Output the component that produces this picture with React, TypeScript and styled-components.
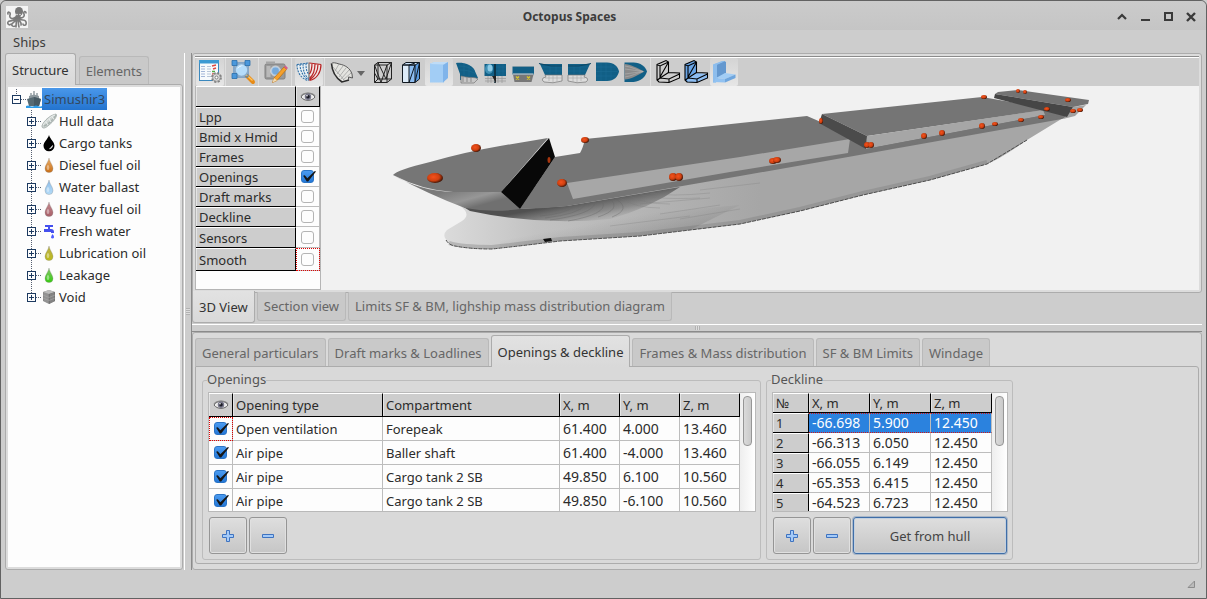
import React from "react";
import styled, { createGlobalStyle, css } from "styled-components";

const GlobalStyle = createGlobalStyle`
  *, *::before, *::after { box-sizing: border-box; }
  body {
    margin: 0;
    background: #cdcdcd;
    color: #2b2b2b;
    font-family: "Noto Sans", "Open Sans", sans-serif;
    font-size: 13px;
    line-height: 18px;
  }
  button, input { font: inherit; color: inherit; margin: 0; }
  ul { list-style: none; margin: 0; padding: 0; }
`;

const line = "#acacac";

/* ---------- window ---------- */

const Window = styled.div`
  display: flex;
  flex-direction: column;
  min-height: 100vh;
  background: #cdcdcd;
  border: 1px solid #626262;
  border-radius: 6px 6px 0 0;
`;

const TitleBar = styled.header`
  display: grid;
  grid-template-columns: auto 1fr auto;
  align-items: center;
  height: 29px;
  padding: 2px 8px 0 5px;
  background: linear-gradient(#cbcbcb, #c5c5c5);
  border-radius: 6px 6px 0 0;
`;

const Title = styled.h1`
  margin: 0;
  font-size: 12px;
  font-weight: 700;
  text-align: center;
  color: #3c3c3c;
`;

const WindowButtons = styled.div`
  display: flex;
  justify-content: flex-end;
  gap: 9px;
  padding-left: 4px;
`;

const WindowButton = styled.button`
  display: flex;
  width: 14px;
  height: 14px;
  padding: 0;
  border: 0;
  background: none;
`;

const MenuBar = styled.nav`
  display: flex;
  align-items: center;
  height: 23px;
  padding: 0 12px;
`;

const MenuItem = styled.button`
  padding: 0;
  border: 0;
  background: none;
  color: #3c3c3c;
`;

const Main = styled.main`
  display: flex;
  flex: 1;
  padding: 0 4px;
`;

const StatusBar = styled.footer`
  display: flex;
  align-items: center;
  justify-content: flex-end;
  height: 28px;
  padding: 0 11px;
`;

/* ---------- tabs and frames ---------- */

const Tabs = styled.div`
  display: flex;
  align-items: flex-end;
  gap: 2px;
  position: relative;
  margin-bottom: -1px;
`;

const BottomTabs = styled(Tabs)`
  align-items: flex-start;
  margin: -2px 0 0;
`;

const SideTabs = styled(Tabs)`
  gap: 3px;
`;

const Tab = styled.button<{ $active?: boolean; $below?: boolean }>`
  height: ${(p) => (p.$active ? 32 : p.$below ? 29 : 28)}px;
  margin: ${(p) => (p.$active ? "0" : p.$below ? "1px 0 0" : "0 0 1px")};
  padding: 0 6px;
  white-space: nowrap;
  border: 1px solid ${(p) => (p.$active ? line : "#b9b9b9")};
  background: ${(p) => (p.$active ? "linear-gradient(#e2e2e2, #d9d9d9)" : "#c9c9c9")};
  color: ${(p) => (p.$active ? "#333" : "#666")};
  ${(p) =>
    p.$below
      ? css`
          border-top: 0;
          border-radius: 0 0 3px 3px;
        `
      : css`
          border-bottom: 0;
          border-radius: 3px 3px 0 0;
        `}
`;

const SideColumn = styled.aside`
  display: flex;
  flex-direction: column;
  flex: none;
  width: 178px;
  margin-right: 1px;
`;

const TreeFrame = styled.div`
  flex: 1;
  padding: 2px;
  border: 1px solid ${line};
  border-radius: 0 3px 3px 3px;
  background: #dcdcdc;
`;

const Splitter = styled.div<{ $horizontal?: boolean }>`
  display: flex;
  flex: none;
  align-items: center;
  justify-content: center;
  background: #cdcdcd;
  ${(p) =>
    p.$horizontal
      ? css`
          height: 8px;
          margin-top: 1px;
          border-top: 1px solid #fff;
          border-bottom: 1px solid #8b8b8b;
        `
      : css`
          width: 8px;
          border-left: 1px solid #fff;
          border-right: 1px solid #8b8b8b;
        `}
`;

const Grip = styled.span<{ $horizontal?: boolean }>`
  width: ${(p) => (p.$horizontal ? 5 : 4)}px;
  height: ${(p) => (p.$horizontal ? 4 : 7)}px;
  background: repeating-linear-gradient(
    ${(p) => (p.$horizontal ? "90deg" : "180deg")},
    #b2b2b2 0 1px,
    #dedede 1px 2px
  );
`;

const WorkColumn = styled.div`
  display: flex;
  flex-direction: column;
  flex: 1;
  min-width: 0;
`;

const ViewFrame = styled.section`
  padding: 2px;
  border: 1px solid ${line};
  border-radius: 3px 3px 3px 0;
  background: #dcdcdc;
`;

const DetailFrame = styled.section`
  padding: 2px 2px 5px;
  border: 1px solid ${line};
  border-radius: 3px;
  background: #dadada;
`;

const DetailPane = styled.div`
  display: flex;
  gap: 5px;
  padding: 4px 6px 3px;
  border: 1px solid ${line};
  border-radius: 0 3px 3px 3px;
  background: #d9d9d9;
`;

/* ---------- tree ---------- */

const TreeBox = styled.div`
  height: 100%;
  padding: 1px 0 0 3px;
  background: #fdfdfd;
`;

const TreeRow = styled.button<{ $level: number }>`
  display: flex;
  align-items: center;
  width: 100%;
  height: 22px;
  padding: 0 0 0 ${(p) => p.$level * 15}px;
  border: 0;
  background: none;
  text-align: left;
  white-space: nowrap;
`;

const TreeText = styled.span<{ $selected?: boolean }>`
  height: 22px;
  padding: 0 2px;
  line-height: 22px;
  ${(p) =>
    p.$selected &&
    css`
      color: #33485f;
      background: linear-gradient(#4a98ea, #2474cf);
    `}
`;

/* ---------- toolbar ---------- */

const ToolBar = styled.div`
  display: flex;
  height: 30px;
  border-top: 1px solid #8b8b8b;
  box-shadow: inset 0 1px #fff;
  padding: 1px 0 0 1px;
  background: #cdcdcd;
`;

const ToolButton = styled.button<{ $lit?: boolean; $wide?: boolean }>`
  display: flex;
  flex: none;
  align-items: center;
  width: ${(p) => (p.$wide ? 41 : 28)}px;
  height: 28px;
  padding: 0;
  border: 0;
  border-radius: 2px;
  background: ${(p) => (p.$lit ? "linear-gradient(#d4d4d4, #e6e6e6)" : "none")};
`;

const ToolGap = styled.span`
  flex: none;
  width: 5px;
  background: linear-gradient(90deg, transparent 1px, #dedede 1px 2px, transparent 2px);
`;

const ViewBody = styled.div`
  display: flex;
  align-items: stretch;
  background: #f1f1f1;
`;

const LayerPanel = styled.div`
  flex: none;
  width: 126px;
  min-height: 204px;
  border: solid #b5b5b5;
  border-width: 0 1px 1px 1px;
  background: #fdfdfd;
`;

const Scene = styled.div`
  flex: 1;
  min-width: 0;
  svg { display: block; width: 100%; height: 204px; }
`;

/* ---------- grids ---------- */

const Grid = styled.table`
  flex: none;
  border-collapse: separate;
  border-spacing: 0;
  table-layout: fixed;
`;

const HeadCell = styled.th<{ $h?: number }>`
  height: ${(p) => p.$h ?? 20}px;
  padding: 0 3px;
  border: solid;
  border-width: 1px 1px 1px 0;
  border-color: #fff #000 #000 #fff;
  box-shadow: inset 1px 0 #e4e4e4;
  background: #cdcdcd;
  font-weight: 400;
  text-align: left;
  white-space: nowrap;
  svg { display: block; margin: 0 auto; }
`;

const Row = styled.tr<{ $selected?: boolean }>`
  td {
    background: ${(p) => (p.$selected ? "#2b82de" : "#fdfdfd")};
    color: ${(p) => (p.$selected ? "#fff" : "inherit")};
    ${(p) => p.$selected && css`border-bottom: 1px dotted #d01818; border-top: 1px dotted #d01818;`}
  }
`;

const Cell = styled.td<{ $h?: number; $focus?: boolean; $number?: boolean }>`
  height: ${(p) => p.$h ?? 20}px;
  padding: 0 3px;
  border: solid #bdbdbd;
  border-width: 0 1px 1px 0;
  font-size: ${(p) => (p.$number ? 14 : 13)}px;
  white-space: nowrap;
  ${(p) => p.$focus && css`outline: 1px dotted #e00000; outline-offset: -1px;`}
`;

const Group = styled.fieldset`
  flex: none;
  min-width: 0;
  margin: 0;
  padding: 3px 4px 5px 5px;
  border: 1px solid #bcbcbc;
  border-radius: 3px;
`;

const GroupTitle = styled.legend`
  height: 18px;
  margin-left: -1px;
  padding: 0;
  line-height: 16px;
  color: #555;
`;

const GridBox = styled.div`
  display: flex;
  height: 120px;
  margin-bottom: 5px;
  overflow: hidden;
  border: 1px solid #b9b9b9;
  background: #fdfdfd;
`;

const ScrollTrack = styled.div`
  width: 15px;
  padding: 3px 3px;
  background: linear-gradient(90deg, #eee, #fff);
`;

const ScrollThumb = styled.div`
  width: 9px;
  height: 50px;
  border: 1px solid #969696;
  border-radius: 4px;
  background: linear-gradient(90deg, #dadada, #cacaca);
`;

const Actions = styled.div`
  display: flex;
  gap: 2px;
  padding-left: 1px;
`;

const PushButton = styled.button<{ $wide?: boolean }>`
  display: flex;
  align-items: center;
  justify-content: center;
  width: ${(p) => (p.$wide ? 154 : 38)}px;
  height: 37px;
  padding: 0;
  border: 1px solid ${(p) => (p.$wide ? "#3f6ea8" : "#959595")};
  border-radius: 3px;
  background: linear-gradient(#dedede, #c6c6c6);
  box-shadow: inset 0 0 0 1px ${(p) => (p.$wide ? "#c3d0df" : "#e0e0e0")},
    0 0 0 1px ${(p) => (p.$wide ? "#a9b7c8" : "transparent")};
  color: #444;
`;

const CheckLabel = styled.label`
  display: flex;
  justify-content: center;
`;

const CheckInput = styled.input`
  appearance: none;
  display: block;
  width: 13px;
  height: 13px;
  border: 1px solid #b4b4b4;
  border-radius: 3px;
  background: #fdfdfd;
  &:checked {
    border-color: #2a73c4;
    background: linear-gradient(#4b9bf0, #2478d8);
  }
  &:checked::before {
    content: "";
    display: block;
    width: 14px;
    height: 11px;
    background: #161616;
    clip-path: polygon(8% 44%, 20% 38%, 38% 66%, 92% 0, 100% 4%, 44% 96%, 34% 96%);
  }
`;

/* ---------- drawings ---------- */

const OctopusIcon = () => (
  <svg width="22" height="22" viewBox="0 0 22 22">
    <rect width="22" height="22" fill="#f4f4f4" />
    <g fill="none" stroke="#7c7c7c" strokeWidth="1.6" strokeLinecap="round">
      <path d="M10 11C6 14 3 12 4 9S1 5 2 8M10 12c-2 4-7 2-8 4s2 4 3 2M10 12c0 4-3 4-4 6s2 3 3 2M11 12c-1 4-1 6-1 9M12 12c3 4 7 0 8 4s-3 4-3 2M12 11c4 2 7 0 6-3s2-3 2-1M12 12c1 4 4 4 3 7M11 12c2 4 1 6 2 9" />
    </g>
    <ellipse cx="13" cy="5.500" rx="4" ry="4.500" fill="#777" />
    <path d="M10 8h5l-1 5H9z" fill="#777" />
    <circle cx="11" cy="8.500" r=".8" fill="#ddd" />
    <circle cx="14" cy="8.500" r=".8" fill="#ddd" />
  </svg>
);

const EyeIcon = () => (
  <svg width="16" height="12" viewBox="0 0 16 12">
    <path d="M1 6C4 1 12 1 15 6 12 10.500 4 10.500 1 6z" fill="#ececec" stroke="#666" strokeWidth="1" />
    <path d="M1 5C4 1 12 1 15 5" fill="none" stroke="#888" strokeWidth="1.200" />
    <circle cx="8" cy="5.800" r="3.200" fill="#77778a" />
    <circle cx="8" cy="5.800" r="1.800" fill="#1c1c26" />
    <circle cx="7" cy="4.800" r=".8" fill="#fff" />
  </svg>
);

const Expander = ({ open, last }: { open?: boolean; last?: boolean }) => (
  <svg width="15" height="22" viewBox="0 0 15 22" shapeRendering="crispEdges">
    <path d={open ? "M5.500 1V6" : last ? "M5.500 0V11" : "M5.500 0V22"} stroke="#555e70" strokeDasharray="1 1" />
    <path d="M10 11.500H15" stroke="#555e70" strokeDasharray="1 1" />
    <rect x="1.500" y="7.500" width="8" height="8" fill="#fdfdfd" stroke="#1d3a60" />
    <path d={open ? "M3 11.500H8" : "M3 11.500H8M5.500 9V14"} stroke="#1d3a60" />
  </svg>
);

const ShipIcon = () => (
  <svg width="16" height="18" viewBox="0 0 16 18">
    <path d="M7 1h2v4H7zM4 3h2v3H4zM10 3h2v3h-2z" fill="#aeb6ba" />
    <path d="M3 6 8 4.500 13 6v3H3z" fill="#8b979d" />
    <path d="M1 9 8 7l7 2-2 7H3z" fill="#566a73" />
    <path d="M8 7l7 2-2 7H8z" fill="#465963" />
    <path d="M0 16q2-1 4 0t4 0 4 0 4 0v2H0z" fill="#2d9ce8" />
  </svg>
);

const HullIcon = () => (
  <svg width="16" height="18" viewBox="0 0 16 18">
    <path d="M1 15C0 12 8 3 15 2c2 2-3 8-7 11-3 3-6 4-7 2z" fill="#cdd3d1" stroke="#96a09d" strokeWidth=".7" />
    <path d="M3 14C7 13 13 7 15 3" fill="none" stroke="#a9b3b0" strokeWidth="1.500" />
    <path d="M2 13C5 9 10 4 14 3M5 10l2 3M8 7l2 3M11 4.500l2 3" fill="none" stroke="#edf1f0" />
  </svg>
);

const dropPath = "M8 2C8.600 6 12 9 12 12.600a4 4 0 0 1-8 0C4 9 7.400 6 8 2z";

const Drop = ({ id, top, bottom }: { id: string; top: string; bottom: string }) => (
  <svg width="16" height="18" viewBox="0 0 16 18">
    <defs>
      <linearGradient id={id} x1="0" y1="0" x2="0" y2="1">
        <stop offset="0" stopColor={top} />
        <stop offset="1" stopColor={bottom} />
      </linearGradient>
    </defs>
    <path d={dropPath} fill={`url(#${id})`} stroke="#777" strokeOpacity=".4" strokeWidth=".7" />
    <ellipse cx="7" cy="11.500" rx="1.300" ry="2.500" fill="#fff" opacity=".4" />
  </svg>
);

const BlackDrop = () => (
  <svg width="16" height="18" viewBox="0 0 16 18">
    <path d="M8 1C9 5 13.500 8 13.500 11.800a5.500 5.500 0 0 1-11 0C2.500 8 7 5 8 1z" fill="#000" />
    <path d="M11.500 11.500q0 3-3 3.200 2-1 3-3.200z" fill="#fff" stroke="#fff" strokeWidth=".6" />
  </svg>
);

const TapIcon = () => (
  <svg width="16" height="18" viewBox="0 0 16 18">
    <path d="M4 3h8v2H9v2h1q3 0 3 3v1h-3v-1H3V7h4V5H4z" fill="#4450ee" />
    <path d="M11.500 12q2 2 1.500 3.500a1.600 1.600 0 0 1-3 0Q10 14 11.500 12z" fill="#4e5cff" />
  </svg>
);

const VoidIcon = () => (
  <svg width="16" height="18" viewBox="0 0 16 18">
    <path d="M8 2l6 2v9l-6 3-6-3V4z" fill="#8a8a8a" />
    <path d="M8 2l6 2-6 2-6-2z" fill="#bcbcbc" />
    <path d="M8 6l6-2v9l-6 3z" fill="#747474" />
    <path d="M2 7l6 2.500L14 7M2 10l6 2.500 6-2.500M4 4.500v9.500M6 5v10M10 5.500V15M12 5v9" fill="none" stroke="#a9a9a9" strokeWidth=".6" />
  </svg>
);

const Art = ({ children }: { children: React.ReactNode }) => (
  <svg width="28" height="28" viewBox="0 0 28 28">{children}</svg>
);

const ListArt = () => (
  <Art>
    <rect x="3.500" y="2.500" width="19" height="20" fill="#f7fafc" stroke="#3b88bd" />
    <path d="M3 2h20v3.500H3z" fill="#3c9ad3" />
    <path d="M5 8.500h4M5 11h4M5 13.500h4M5 16h4M5 18.500h4" stroke="#a4b7d8" />
    <path d="M11 8.500h4M11 11h4M11 13.500h4M11 16h4M11 18.500h4" stroke="#b8c6d8" />
    <path d="M16 8l4-1M17 11l3-1M16 16h2" stroke="#df4a42" strokeWidth="1.500" />
    <path d="M16 13.500h3" stroke="#54aa44" strokeWidth="1.500" />
    <circle cx="20.500" cy="19.500" r="4.500" fill="#dedede" stroke="#828282" strokeWidth="1.800" strokeDasharray="2.200 1.330" />
    <circle cx="20.500" cy="19.500" r="3.700" fill="#dcdcdc" stroke="#8a8a8a" strokeWidth=".7" />
    <circle cx="20.500" cy="19.500" r="1.500" fill="#fff" stroke="#808080" />
  </Art>
);

const ZoomArt = () => (
  <Art>
    <path d="M17 17l7 7" stroke="#e78b17" strokeWidth="4" strokeLinecap="round" />
    <path d="M17 16.500l6.500 6" stroke="#ffc45e" strokeWidth="1.300" />
    <path d="M5 5h14v14H5z" fill="none" stroke="#3f7fbe" />
    <circle cx="12.500" cy="12" r="6.500" fill="#b5dcfa" stroke="#8babc9" strokeWidth="1.600" />
    <path d="M8 11q2-4 6-3.500-4 1-6 3.500z" fill="#fff" />
    <path d="M3 2.500h5v5H3zM16 2.500h5v5h-5zM3 15.500h5v5H3z" fill="#4b98dc" stroke="#2b6fab" strokeWidth=".8" />
  </Art>
);

const CameraArt = () => (
  <Art>
    <rect x="3" y="6" width="20" height="15" rx="1.500" fill="#999" stroke="#808080" />
    <path d="M4 3.500h9V6H4z" fill="#a5a5a5" />
    <rect x="4.500" y="8" width="4" height="11" fill="#b9b9b9" />
    <circle cx="13.500" cy="13" r="5" fill="#aecbe8" stroke="#d2d2d2" />
    <circle cx="13.500" cy="13" r="3.400" fill="#76a9da" />
    <path d="M10.500 24.500l1.500-4.500L22 9l2.500 2.500-9.500 11z" fill="#f5a02b" stroke="#b86e10" strokeWidth=".7" />
    <path d="M22 9l1.500-1.500L26 10l-1.500 1.500z" fill="#d65b8b" />
    <path d="M10.500 24.500l1.500-4.500 3 2.500z" fill="#f1dcb5" />
  </Art>
);

const BodyPlanArt = () => (
  <Art>
    <path d="M2 6.500 13.500 5v17.500C6 21 2 14 2 6.500z" fill="#e9eff3" />
    <path d="M26 6.500 14.500 5v17.500C22 21 26 14 26 6.500z" fill="#f3e5e5" />
    <path d="M14 4.500v18" stroke="#555" />
    <g fill="none" stroke="#2d6ea6" strokeWidth="1.100" strokeDasharray="2 1">
      <path d="M2 6.500C2 14 6 21 13.500 22.500M5 6c0 8 4 13 8.500 16M8 5.500c0 8 2 12 5.500 15M11 5c0 7 1 9 2.500 11M2 6.500 13.500 5" />
    </g>
    <g fill="none" stroke="#b72424" strokeWidth="1.200">
      <path d="M26 6.500C26 14 22 21 14.500 22.500M23 6c0 8-4 13-8.500 16M20 5.500c0 8-2 12-5.500 15M17 5c0 7-1 9-2.500 11M26 6.500 14.500 5" />
    </g>
  </Art>
);

const ShipViewArt = () => (
  <svg width="41" height="28" viewBox="0 0 41 28">
    <path d="M3.500 5.500C5 4 8 5 11 6c6 1 11 4 13 10l.5 3-4-1v3l-7 3C8 21 3 12 3.500 5.500z" fill="#e4e4e0" />
    <path d="M3.500 5.500C4 13 8 20 14 24l7-2" fill="none" stroke="#2c2c2c" strokeWidth="1.600" />
    <path d="M3.500 5.500C5 4 8 5 11 6c6 1 11 4 13 10l.5 4-4-1v3" fill="none" stroke="#5b5b5b" />
    <path d="M7 13l4-7M9 16l6-8M11 19l7-9M13 21l8-9M15 22l8-7M5 9c4 5 8 9 11 13" stroke="#999" strokeWidth=".7" fill="none" />
    <path d="M29 13h8l-4 5z" fill="#666" />
  </svg>
);

const WirePrismArt = () => (
  <Art>
    <path
      d="M5.500 7 9 4.500h13.500L18 7zM5.500 7v17.500H18V7M22.500 4.500V21L18 24.500M9 4.500V21h13.500M5.500 24.500 9 21M5.500 7l6.500 17.500L18 7M9 4.500l8 16.500 5.500-16.500M5.500 15 9 21"
      fill="none"
      stroke="#222"
    />
  </Art>
);

const SolidPrismArt = () => (
  <Art>
    <path d="M5 5.500 10 4h13l-4 3v17.500H5z" fill="#a2cdf5" />
    <path d="M5 6 9 4h14l-4 2.500z" fill="#bfdcf7" />
    <path d="M18 7l5-3v16l-5 4.500z" fill="#80b4ea" />
  </Art>
);

const BluePrismArt = () => (
  <Art>
    <path d="M5.500 7 9 4.500h13.500L18 7z" fill="#cfe6fb" />
    <path d="M5.500 7H12v17.500H5.500z" fill="#ddebf8" />
    <path d="M12 7h6v17.500h-6z" fill="#8cbcf0" />
    <path d="M18 7l4.500-2.500V21L18 24.500z" fill="#5b9be0" />
    <path d="M5.500 7 9 4.500h13.500L18 7zM5.500 7v17.500H18V7zM22.500 4.500V21L18 24.500M12 7v17.500M18 7l-6 17.500M22.500 5 18 24M12 7l6-2" fill="none" stroke="#101820" />
  </Art>
);

const teal = "#115f86";
const MeshLines = ({ d }: { d: string }) => <path d={d} fill="none" stroke="#1f6e95" strokeWidth=".5" />;

const QuarterArt = () => (
  <Art>
    <path d="M3 5c8-1 15 2 18 6l4 9-4 2H7v-6z" fill={teal} />
    <path d="M8 18c7 2 11 1 15 2l2 1-4 4H8z" fill="#c6c6c6" stroke="#777" strokeWidth=".7" />
    <MeshLines d="M6 8c7 0 12 2 16 5M7 12c6 0 11 1 16 4M11 5v12M16 7v11" />
    <path d="M10 19v5M14 19v5M18 20v4" stroke="#8b8b8b" />
  </Art>
);

const MidArt = () => (
  <Art>
    <path d="M3.500 6h21.500v12H3.500z" fill={teal} />
    <path d="M3.500 18h21.500v7H3.500z" fill="#cacaca" />
    <ellipse cx="8" cy="11" rx="4" ry="5" fill="#3f90b5" />
    <ellipse cx="9" cy="10" rx="2.500" ry="3.500" fill="#8fcbe6" />
    <path d="M14 6v19" stroke="#0c2735" strokeWidth="1.500" />
    <path d="M4 20.500h21M4 23h21M17 18v7M21 18v7M7 18v7M10 18v7" stroke="#999" strokeWidth=".7" />
    <path d="M11 18h4v7z" fill="#222" />
    <MeshLines d="M15 9h10M15 13h10M18 6v12M22 6v12" />
  </Art>
);

const SternArt = () => (
  <Art>
    <path d="M3.500 8.500h21.500v8H3.500z" fill={teal} />
    <path d="M4 16.500h20.500l-2 7.500h-17z" fill="#777" />
    <path d="M4 8.500h21" stroke="#7d99a6" />
    <path d="M7 18.500l3 3M10 18.500l-3 3M18 18.500l3 3M21 18.500l-3 3" stroke="#d8c72a" strokeWidth="1.400" />
    <path d="M4 16h20.500" stroke="#b9c2c6" strokeWidth="1.200" />
  </Art>
);

const SideShape = () => (
  <>
    <path d="M3 6h22v11H8z" fill={teal} />
    <path d="M8 17h17v6q-9 3-18 1-3-2-1-4l3-1z" fill="#dcdcdc" stroke="#777" strokeWidth=".7" />
    <path d="M8 20h17M12 17v6M16 17v7M20 17v7" stroke="#aaa" strokeWidth=".6" />
    <MeshLines d="M5 9h20M7 13h18M13 7v9M19 7v9" />
    <path d="M2 5.500 14 8h11" fill="none" stroke="#0e4866" strokeWidth="1.200" />
  </>
);

const BowSideArt = () => <Art><SideShape /></Art>;
const AftSideArt = () => (
  <Art>
    <g transform="matrix(-1 0 0 1 28 0)"><SideShape /></g>
  </Art>
);

const TopArt = () => (
  <Art>
    <path d="M3 4.500h11c7 0 11 4 12 9-1 5-5 9.500-12 9.500H3z" fill={teal} />
    <MeshLines d="M3 9h20M3 13.500h22M3 18h20M8 5v18M13 5v18M18 6v16" />
  </Art>
);

const BottomArt = () => (
  <Art>
    <path d="M3.500 4.500h9c7 0 12 4 13.500 9-1.500 5-6 10-13.500 10.500h-9z" fill={teal} />
    <path d="M3.500 6c6 0 12 4 20 7.500-8 4-13 8-20 8z" fill="#8a8a8a" />
    <path d="M4 8c7 1 12 4 18 5.500M4 11l18 2.500M4 16l18-2.500M4 19c7-1 12-4 18-5.500" fill="none" stroke="#b3b3b3" strokeWidth=".6" />
  </Art>
);

const Corner = ({ back, inner, floor, wire }: { back: string; inner: string; floor: string; wire: boolean }) => (
  <Art>
    <path d="M3 6.500 6 5v19.500l-3-2z" fill={back} />
    <path d="M3 6 12.500 2.500 14 4v11l-8 4-3 3z" fill={inner} />
    <path d="M4 21l11-6 11 1v4l-11 4.500H7z" fill={floor} />
    {wire && (
      <path
        d="M3 6.500 12 2.500l2.500 1.500v10.500l11 .5v5L15 24.500 5 24l-2-2zM3 6.500 6 8l8.500-4M6 8v12l8.500-5.500M6 20l-2.500 2M6 20l9 1 10.500-5M15 21v3.500M6 19 14 5"
        fill="none"
        stroke="#000"
        strokeWidth="1.100"
      />
    )}
  </Art>
);

const SolidCornerArt = () => (
  <Art>
    <path d="M3 6.500 7 5v14l-1 5.500H3z" fill="#a2cdf5" />
    <path d="M7 5.500 14 3l2 1v11l-9 6z" fill="#6498cf" />
    <path d="M3 6.500 12 3l3 .5-8 3.500v14l-1 3.500H3z" fill="#8dbdec" />
    <path d="M7 7l8-3.500V15l-8 5z" fill="#6498cf" />
    <path d="M6 20l9-5 10.500 1.500L15 21z" fill="#a2cdf5" />
    <path d="M6 20l9 1v3.500L4 24z" fill="#92c2f1" />
    <path d="M15 21l10.500-4.500v3.500L15 24.500z" fill="#6fa6de" />
  </Art>
);

const PlusArt = () => (
  <svg width="14" height="14" viewBox="0 0 14 14">
    <path d="M5.500 1.500h3v4h4v3h-4v4h-3v-4h-4v-3h4z" fill="#a4caf8" stroke="#3e73c0" />
  </svg>
);

const MinusArt = () => (
  <svg width="14" height="14" viewBox="0 0 14 14">
    <path d="M1.500 5.500h11v3h-11z" fill="#a4caf8" stroke="#3e73c0" />
  </svg>
);

const markers: [number, number, number, number][] = [
  [435, 178, 8, 5], [476, 148, 5, 4], [562, 183, 5, 4], [585, 140, 4, 3],
  [673, 177, 4, 4], [679, 177, 4, 4], [773, 161, 4, 3], [777, 160, 4, 3],
  [821, 121, 2, 3], [867, 145, 3, 3], [871, 145, 3, 3], [924, 136, 3, 3],
  [942, 133, 3, 3], [982, 126, 3, 3], [995, 124, 3, 2], [1021, 120, 3, 2],
  [1041, 117, 3, 2], [1047, 109, 3, 2], [1073, 111, 3, 2], [1080, 110, 3, 2],
  [1068, 100, 3, 2], [1018, 91, 2, 2], [1025, 92, 2, 2], [984, 97, 3, 2],
];

const ShipModel = () => (
  <svg viewBox="321 86 878 204" role="img" aria-label="Hull model">
    <defs>
      <linearGradient id="hull" gradientUnits="userSpaceOnUse" x1="440" y1="0" x2="760" y2="0">
        <stop offset="0" stopColor="#dcdcdc" />
        <stop offset=".3" stopColor="#c2c2c2" />
        <stop offset="1" stopColor="#a6a6a6" />
      </linearGradient>
      <linearGradient id="keel" gradientUnits="userSpaceOnUse" x1="600" y1="222" x2="604" y2="244">
        <stop offset="0" stopColor="#777" stopOpacity="0" />
        <stop offset="1" stopColor="#6c6c6c" stopOpacity=".6" />
      </linearGradient>
      <linearGradient id="flare" gradientUnits="userSpaceOnUse" x1="450" y1="190" x2="456" y2="212">
        <stop offset="0" stopColor="#7a7a7a" />
        <stop offset=".6" stopColor="#979797" />
        <stop offset="1" stopColor="#707070" />
      </linearGradient>
      <linearGradient id="shade" gradientUnits="userSpaceOnUse" x1="560" y1="205" x2="565" y2="232">
        <stop offset="0" stopColor="#505050" />
        <stop offset=".5" stopColor="#777" stopOpacity=".7" />
        <stop offset="1" stopColor="#aaa" stopOpacity="0" />
      </linearGradient>
      <radialGradient id="ball" cx=".4" cy=".4" r=".62">
        <stop offset="0" stopColor="#f4511c" />
        <stop offset=".6" stopColor="#cf4010" />
        <stop offset="1" stopColor="#3d1204" />
      </radialGradient>
    </defs>
    <path d="M393 175 430 190 460 206Q472 214 462 221L447 230Q443 234 445 238 449 244 455 246 470 249 492 249 520 246 560 241L640 236 740 224 800 211 863 195 930 180 987 164Q1000 159 1027 140L1063 118 1067 106 850 140 560 190z" fill="url(#hull)" />
    <path d="M449 243Q462 247 492 247 520 244 560 239L640 234 740 222 800 209 863 193 930 178 987 162" fill="none" stroke="#777" strokeOpacity=".35" strokeWidth="4" />
    <path d="M446 240Q449 245 455 246 470 249 492 249 520 246 560 241L640 236 740 224 800 211 863 195 930 180 987 164 1027 140" fill="none" stroke="#4c4c4c" strokeWidth="1" strokeDasharray="4 1" />
    <path d="M500 226 740 205 690 230 640 236 560 241 500 247z" fill="url(#keel)" opacity=".5" />
    <path d="M462 206 520 209 567 206 680 187Q650 208 610 219 540 226 470 211z" fill="url(#shade)" />
    <g fill="none" stroke="#666" strokeOpacity=".5" strokeWidth=".8">
      <path d="M575 206q-10 8-35 10M585 205q-6 9-40 13M595 203q-2 11-45 17M603 203q4 11-35 18M610 199q12 10-12 18M616 199q16 10-4 18" />
    </g>
    <g fill="none" stroke="#777" strokeOpacity=".35" strokeWidth=".8">
      <path d="M620 198q15 10 40 10M630 196q14 8 40 8M640 194q12 6 60 4M650 193q20 4 60 0M660 214l60-9M680 219l60-10M610 226l80-10M700 190l60-7M640 204l70-6" />
    </g>
    <path d="M393 175Q420 191 453 192H501L520 209Q492 213 465 208 430 195 393 175z" fill="url(#flare)" />
    <path d="M393 175Q397 170 430 162 465 152 500 146L548 138 501 192H453Q422 190 393 175z" fill="#767676" />
    <path d="M520 209 555 157 580 153Q583 148 585 139L665 131 807 116 867 142 982 120 1050 109 1067 117 1062 119 848 157 740 176 567 206Q543 209 520 209z" fill="#757575" />
    <path d="M549 138 555 157 520 209 501 192z" fill="#080808" />
    <path d="M567 183 740 157 850 139 848 153 730 172 573 199z" fill="#a7a7a7" />
    <path d="M822 114 982 97 1052 109 867 136z" fill="#757575" />
    <path d="M822 114 867 136 866 149 819 123z" fill="#4b4b4b" />
    <path d="M867 136 1043 110 1045 115 866 149z" fill="#a6a6a6" />
    <path d="M866 149 1045 115 1067 117 866 152z" fill="#757575" />
    <path d="M1073 107 1086 105 1075 116 1063 119z" fill="#a2a2a2" />
    <path d="M995 94 998 92 1018 90 1089 100 1088 104 1073 107z" fill="#737373" />
    <path d="M995 94 1073 107 1067 117 994 98z" fill="#464646" />
    <path d="M543 239l8-1 1 3-7 1z" fill="#111" />
    <ellipse cx="549" cy="160" rx="1.500" ry="3" fill="#a8360e" />
    {markers.map(([x, y, rx, ry]) => (
      <ellipse key={`${x}-${y}`} cx={x} cy={y} rx={rx} ry={ry} fill="url(#ball)" />
    ))}
  </svg>
);

/* ---------- parts ---------- */

const Check = ({ label, checked }: { label: string; checked?: boolean }) => (
  <CheckLabel>
    <CheckInput type="checkbox" aria-label={label} defaultChecked={checked} />
  </CheckLabel>
);

const treeItems: [string, React.ReactNode][] = [
  ["Hull data", <HullIcon />],
  ["Cargo tanks", <BlackDrop />],
  ["Diesel fuel oil", <Drop id="diesel" top="#e9b06d" bottom="#c96e16" />],
  ["Water ballast", <Drop id="ballast" top="#8dbce8" bottom="#b4dcf8" />],
  ["Heavy fuel oil", <Drop id="heavy" top="#c48b90" bottom="#a85f68" />],
  ["Fresh water", <TapIcon />],
  ["Lubrication oil", <Drop id="lube" top="#b9b04a" bottom="#bdbb1c" />],
  ["Leakage", <Drop id="leak" top="#86c46b" bottom="#36cc10" />],
  ["Void", <VoidIcon />],
];

const layers: [string, number][] = [
  ["Lpp", 20], ["Bmid x Hmid", 20], ["Frames", 20], ["Openings", 20],
  ["Draft marks", 20], ["Deckline", 20], ["Sensors", 21], ["Smooth", 23],
];

const openings = [
  ["Open ventilation", "Forepeak", "61.400", "4.000", "13.460"],
  ["Air pipe", "Baller shaft", "61.400", "-4.000", "13.460"],
  ["Air pipe", "Cargo tank 2 SB", "49.850", "6.100", "10.560"],
  ["Air pipe", "Cargo tank 2 SB", "49.850", "-6.100", "10.560"],
];

const deckline = [
  ["-66.698", "5.900", "12.450"],
  ["-66.313", "6.050", "12.450"],
  ["-66.055", "6.149", "12.450"],
  ["-65.353", "6.415", "12.450"],
  ["-64.523", "6.723", "12.450"],
];

const tools: { name: string; art?: React.ReactNode; lit?: boolean; wide?: boolean }[] = [
  { name: "Properties", art: <ListArt />, lit: true }, { name: "" },
  { name: "Zoom to fit", art: <ZoomArt /> }, { name: "" },
  { name: "Snapshot", art: <CameraArt /> }, { name: "" },
  { name: "Body plan", art: <BodyPlanArt />, lit: true }, { name: "" },
  { name: "Ship view", art: <ShipViewArt />, wide: true },
  { name: "Wireframe", art: <WirePrismArt /> },
  { name: "Shaded wireframe", art: <BluePrismArt /> },
  { name: "Solid", art: <SolidPrismArt />, lit: true },
  { name: "Quarter view", art: <QuarterArt /> },
  { name: "Front view", art: <MidArt /> },
  { name: "Stern view", art: <SternArt /> },
  { name: "Port view", art: <BowSideArt /> },
  { name: "Starboard view", art: <AftSideArt /> },
  { name: "Top view", art: <TopArt /> },
  { name: "Bottom view", art: <BottomArt /> }, { name: "" },
  { name: "Corner wireframe", art: <Corner back="none" inner="none" floor="none" wire /> },
  { name: "Corner shaded", art: <Corner back="#5b9be0" inner="#6aa5e6" floor="#8dbdf2" wire /> },
  { name: "Corner solid", art: <SolidCornerArt />, lit: true },
];

const detailTabs = [
  "General particulars", "Draft marks & Loadlines", "Openings & deckline",
  "Frames & Mass distribution", "SF & BM Limits", "Windage",
];

export default function App() {
  return (
    <>
      <GlobalStyle />
      <Window>
        <TitleBar>
          <OctopusIcon />
          <Title>Octopus Spaces</Title>
          <WindowButtons>
            <WindowButton aria-label="Roll up">
              <svg width="14" height="14"><path d="M3 9l4-4 4 4" fill="none" stroke="#3a3a3a" strokeWidth="2.200" /></svg>
            </WindowButton>
            <WindowButton aria-label="Minimize">
              <svg width="14" height="14"><path d="M3 10h9" stroke="#3a3a3a" strokeWidth="2" /></svg>
            </WindowButton>
            <WindowButton aria-label="Maximize">
              <svg width="14" height="14"><rect x="4" y="3" width="7" height="7" fill="none" stroke="#3a3a3a" strokeWidth="2" /></svg>
            </WindowButton>
            <WindowButton aria-label="Close">
              <svg width="14" height="14"><path d="M3 3l8 8M11 3l-8 8" stroke="#3a3a3a" strokeWidth="2.400" /></svg>
            </WindowButton>
          </WindowButtons>
        </TitleBar>
        <MenuBar>
          <MenuItem>Ships</MenuItem>
        </MenuBar>
        <Main>
          <SideColumn>
            <SideTabs role="tablist">
              <Tab role="tab" $active>Structure</Tab>
              <Tab role="tab">Elements</Tab>
            </SideTabs>
            <TreeFrame>
              <TreeBox>
                <TreeRow $level={0}>
                  <Expander open />
                  <ShipIcon />
                  <TreeText $selected>Simushir3</TreeText>
                </TreeRow>
                <ul>
                  {treeItems.map(([label, icon], i) => (
                    <li key={label}>
                      <TreeRow $level={1}>
                        <Expander last={i === treeItems.length - 1} />
                        {icon}
                        <TreeText>{label}</TreeText>
                      </TreeRow>
                    </li>
                  ))}
                </ul>
              </TreeBox>
            </TreeFrame>
          </SideColumn>
          <Splitter>
            <Grip />
          </Splitter>
          <WorkColumn>
            <ViewFrame>
              <ToolBar role="toolbar">
                {tools.map((t, i) =>
                  t.name ? (
                    <ToolButton key={i} aria-label={t.name} $lit={t.lit} $wide={t.wide}>{t.art}</ToolButton>
                  ) : (
                    <ToolGap key={i} />
                  ),
                )}
              </ToolBar>
              <ViewBody>
                <LayerPanel>
                  <Grid>
                    <colgroup><col width="100" /><col width="24" /></colgroup>
                    <thead>
                      <tr>
                        <HeadCell $h={21} />
                        <HeadCell $h={21}><EyeIcon /></HeadCell>
                      </tr>
                    </thead>
                    <tbody>
                      {layers.map(([name, h]) => (
                        <Row key={name}>
                          <HeadCell $h={h} scope="row">{name}</HeadCell>
                          <Cell $h={h} $focus={name === "Smooth"}>
                            <Check label={name} checked={name === "Openings"} />
                          </Cell>
                        </Row>
                      ))}
                    </tbody>
                  </Grid>
                </LayerPanel>
                <Scene><ShipModel /></Scene>
              </ViewBody>
            </ViewFrame>
            <BottomTabs role="tablist">
              <Tab role="tab" $below $active>3D View</Tab>
              <Tab role="tab" $below>Section view</Tab>
              <Tab role="tab" $below>Limits SF &amp; BM, lighship mass distribution diagram</Tab>
            </BottomTabs>
            <Splitter $horizontal>
              <Grip $horizontal />
            </Splitter>
            <DetailFrame>
              <Tabs role="tablist">
                {detailTabs.map((t, i) => (
                  <Tab key={t} role="tab" $active={i === 2}>{t}</Tab>
                ))}
              </Tabs>
              <DetailPane>
                <Group>
                  <GroupTitle>Openings</GroupTitle>
                  <GridBox>
                    <Grid>
                      <colgroup>
                        <col width="24" /><col width="150" /><col width="177" />
                        <col width="60" /><col width="60" /><col width="60" />
                      </colgroup>
                      <thead>
                        <tr>
                          <HeadCell $h={24}><EyeIcon /></HeadCell>
                          {["Opening type", "Compartment", "X, m", "Y, m", "Z, m"].map((h) => (
                            <HeadCell key={h} $h={24}>{h}</HeadCell>
                          ))}
                        </tr>
                      </thead>
                      <tbody>
                        {openings.map((row, i) => (
                          <Row key={i}>
                            <Cell $h={24} $focus={i === 0}>
                              <Check label={`Show opening ${i + 1}`} checked />
                            </Cell>
                            {row.map((v, j) => <Cell key={j} $h={24} $number={j > 1}>{v}</Cell>)}
                          </Row>
                        ))}
                      </tbody>
                    </Grid>
                    <ScrollTrack><ScrollThumb /></ScrollTrack>
                  </GridBox>
                  <Actions>
                    <PushButton aria-label="Add opening"><PlusArt /></PushButton>
                    <PushButton aria-label="Remove opening"><MinusArt /></PushButton>
                  </Actions>
                </Group>
                <Group>
                  <GroupTitle>Deckline</GroupTitle>
                  <GridBox>
                    <Grid>
                      <colgroup>
                        <col width="36" /><col width="61" /><col width="61" /><col width="61" />
                      </colgroup>
                      <thead>
                        <tr>
                          {["№", "X, m", "Y, m", "Z, m"].map((h) => <HeadCell key={h}>{h}</HeadCell>)}
                        </tr>
                      </thead>
                      <tbody>
                        {deckline.map((row, i) => (
                          <Row key={i} $selected={i === 0}>
                            <HeadCell scope="row">{i + 1}</HeadCell>
                            {row.map((v, j) => <Cell key={j} $number>{v}</Cell>)}
                          </Row>
                        ))}
                      </tbody>
                    </Grid>
                    <ScrollTrack><ScrollThumb /></ScrollTrack>
                  </GridBox>
                  <Actions>
                    <PushButton aria-label="Add point"><PlusArt /></PushButton>
                    <PushButton aria-label="Remove point"><MinusArt /></PushButton>
                    <PushButton $wide>Get from hull</PushButton>
                  </Actions>
                </Group>
              </DetailPane>
            </DetailFrame>
          </WorkColumn>
        </Main>
        <StatusBar>
          <svg width="8" height="8"><path d="M7.500 1v6.500H1z" fill="#bbb" stroke="#8c8c8c" /></svg>
        </StatusBar>
      </Window>
    </>
  );
}
